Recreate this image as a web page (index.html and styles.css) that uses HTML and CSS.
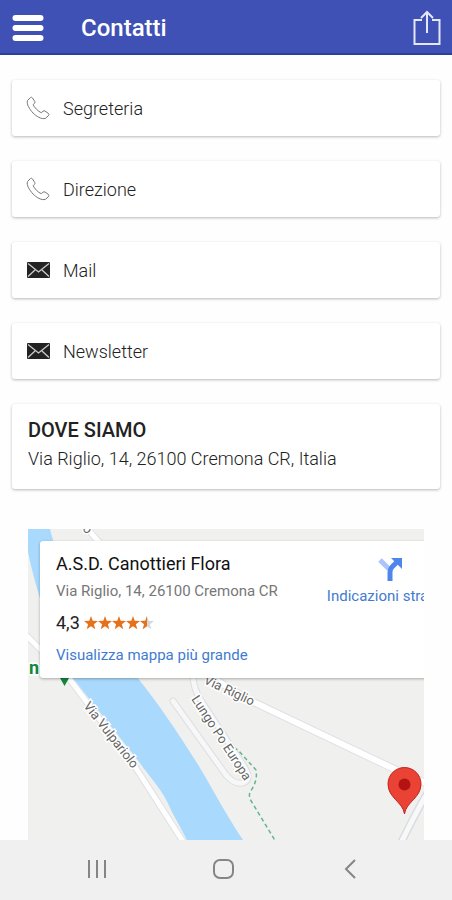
FILE: index.html
```
<!DOCTYPE html>
<html lang="it">
<head>
    <meta charset="UTF-8">
    <meta name="viewport" content="width=device-width, initial-scale=1.0">
    <title>Contatti</title>
    <link rel="stylesheet" href="styles.css">
</head>
<body>
    <header class="topbar">
        <button class="icon-button" type="button" aria-label="Menu">
            <svg width="32" height="28" viewBox="0 0 32 28">
                <path d="M3.500 4H28.500M3.500 14H28.500M3.500 24H28.500" stroke="#fff" stroke-width="6" stroke-linecap="round"/>
            </svg>
        </button>
        <h1 class="title">Contatti</h1>
        <button class="icon-button" type="button" aria-label="Condividi">
            <svg width="28" height="36" viewBox="0 0 28 36" fill="none" stroke="#e4e8fa" stroke-width="2">
                <path d="M9 10H1.500V34H26.500V10H19M14 23V2M8 8L14 2L20 8"/>
            </svg>
        </button>
    </header>

    <main class="content">
        <button class="card contact" type="button">
            <svg class="contact-icon" viewBox="0 0 24 24" fill="none" stroke="#777" stroke-width="1" stroke-linejoin="round">
                <path d="M1.500 4.500L4.500 1.500Q5.500 .7 6.500 2L8.800 5.500Q9.300 6.700 8.200 7.700L7.200 8.700C8 11 12 15.500 15.300 16.700L17 15.200Q18 14.500 19 15L22.300 17.300Q23.500 18.500 22.300 19.800L19.500 22.300C15.500 23.800 10 20 7 17C3.500 13 .2 8 1.500 4.500Z"/>
            </svg>
            <span>Segreteria</span>
        </button>
        <button class="card contact" type="button">
            <svg class="contact-icon" viewBox="0 0 24 24" fill="none" stroke="#777" stroke-width="1" stroke-linejoin="round">
                <path d="M1.500 4.500L4.500 1.500Q5.500 .7 6.500 2L8.800 5.500Q9.300 6.700 8.200 7.700L7.200 8.700C8 11 12 15.500 15.300 16.700L17 15.200Q18 14.500 19 15L22.300 17.300Q23.500 18.500 22.300 19.800L19.500 22.300C15.500 23.800 10 20 7 17C3.500 13 .2 8 1.500 4.500Z"/>
            </svg>
            <span>Direzione</span>
        </button>
        <button class="card contact" type="button">
            <svg class="contact-icon" viewBox="0 0 24 24" fill="none">
                <rect x="1" y="4" width="23" height="16" rx="1" fill="#222"/>
                <path d="M2 5.500L12.500 14L23 5.500M2 18.500L9 12M23 18.500L16 12" stroke="#ccc" stroke-width="1.300"/>
            </svg>
            <span>Mail</span>
        </button>
        <button class="card contact" type="button">
            <svg class="contact-icon" viewBox="0 0 24 24" fill="none">
                <rect x="1" y="4" width="23" height="16" rx="1" fill="#222"/>
                <path d="M2 5.500L12.500 14L23 5.500M2 18.500L9 12M23 18.500L16 12" stroke="#ccc" stroke-width="1.300"/>
            </svg>
            <span>Newsletter</span>
        </button>

        <section class="card address">
            <h2 class="address-title">DOVE SIAMO</h2>
            <p class="address-text">Via Riglio, 14, 26100 Cremona CR, Italia</p>
        </section>

        <section class="map">
            <svg class="map-canvas" viewBox="28 529 396 311" preserveAspectRatio="xMinYMin slice">
                <rect x="28" y="529" width="396" height="311" fill="#f0f0ef"/>
                <!-- fiume -->
                <path d="M28 529H50C56 555 75 600 137 677C158 703 178 733 195 760C207 778 220 805 243 840H187L171 810C162 788 150 778 140 763L72 677C55 645 38 600 28 552Z" fill="#a9d9fd"/>
                <!-- strade -->
                <g fill="none" stroke-linecap="round" stroke-linejoin="round">
                    <path d="M80 520L110 555M20 629L68 677L134 765L184 843" stroke="#dfe1e4" stroke-width="7"/>
                    <path d="M80 520L110 555M20 629L68 677L134 765L184 843" stroke="#fff" stroke-width="5"/>
                    <path d="M200 670L245 698L392 768L430 785" stroke="#dfe1e4" stroke-width="8"/>
                    <path d="M200 670L245 698L392 768L430 785" stroke="#fff" stroke-width="6"/>
                    <path d="M193 670Q192 688 202 702L245 768Q252 780 243 783Q235 785 226 775L173 701" stroke="#dcdee3" stroke-width="7"/>
                    <path d="M193 670Q192 688 202 702L245 768Q252 780 243 783Q235 785 226 775L173 701" stroke="#f7f7f7" stroke-width="5"/>
                    <path d="M428 792Q417 810 400 845" stroke="#d9dde3" stroke-width="8"/>
                    <path d="M428 792Q417 810 400 845" stroke="#f8f8f8" stroke-width="5"/>
                    <path d="M228 744L238 750L256 770Q258 781 250 792Q248 797 253 804L276 842" stroke="#65b48d" stroke-width="1.500" stroke-dasharray="4 3" stroke-linecap="butt"/>
                </g>
                <g class="map-labels">
                    <text x="83" y="706" transform="rotate(52 83 706)">Via Vulpariolo</text>
                    <text x="203" y="683" transform="rotate(25 203 683)">Via Riglio</text>
                    <text x="191" y="699" transform="rotate(57 191 699)">Lungo Po Europa</text>
                    <text x="82" y="529" transform="rotate(50 82 529)">o</text>
                    <text class="map-place" x="29" y="674">n</text>
                </g>
                <path d="M60 678H69L64.500 686Z" fill="#11873b"/>
                <path d="M404.500 814C403 802 388 798 388 784A16.500 16.500 0 0 1 421 784C421 798 406 802 404.500 814Z" fill="#ea4335" stroke="#c5221f" stroke-width="1"/>
                <circle cx="404.500" cy="784.500" r="6" fill="#b31412"/>
            </svg>

            <div class="place">
                <div class="place-info">
                    <h3 class="place-name">A.S.D. Canottieri Flora</h3>
                    <p class="place-address">Via Riglio, 14, 26100 Cremona CR</p>
                    <div class="rating">
                        <span>4,3</span>
                        <svg width="70" height="14" viewBox="0 0 70 14" aria-label="4,3 su 5">
                            <defs>
                                <path id="star" d="M7 0L8.700 4.800L14 5L9.900 8.200L11.300 13.200L7 10.300L2.700 13.200L4.100 8.200L0 5L5.300 4.800Z"/>
                                <clipPath id="half"><rect width="7" height="14"/></clipPath>
                            </defs>
                            <g fill="#e7711b">
                                <use href="#star"/>
                                <use href="#star" x="14"/>
                                <use href="#star" x="28"/>
                                <use href="#star" x="42"/>
                                <use href="#star" x="56" fill="#d5d8da"/>
                                <g transform="translate(56 0)"><use href="#star" clip-path="url(#half)"/></g>
                            </g>
                        </svg>
                    </div>
                    <a class="place-link" href="#">Visualizza mappa più grande</a>
                </div>
                <a class="directions" href="#">
                    <svg width="24" height="24" viewBox="0 0 24 24" fill="none">
                        <path d="M2 3L11 12" stroke="#a9c5fb" stroke-width="5"/>
                        <path d="M12 24V15Q12 12 14 10L19 5" stroke="#4e86ee" stroke-width="5"/>
                        <path d="M13 1H24V12Z" fill="#4e86ee"/>
                    </svg>
                    <span>Indicazioni stradali</span>
                </a>
            </div>
        </section>
    </main>

    <nav class="navbar">
        <button class="nav-button" type="button" aria-label="Recenti">
            <svg width="24" height="24" viewBox="0 0 24 24" fill="none" stroke="#858585" stroke-width="2">
                <path d="M4 2V20M12 2V20M20 2V20"/>
            </svg>
        </button>
        <button class="nav-button" type="button" aria-label="Home">
            <svg width="24" height="24" viewBox="0 0 24 24" fill="none" stroke="#858585" stroke-width="2">
                <rect x="2" y="2" width="19" height="18" rx="6"/>
            </svg>
        </button>
        <button class="nav-button" type="button" aria-label="Indietro">
            <svg width="24" height="24" viewBox="0 0 24 24" fill="none" stroke="#858585" stroke-width="2">
                <path d="M16 2L7 11L16 20"/>
            </svg>
        </button>
    </nav>
</body>
</html>
```
FILE: styles.css
```
* {
    box-sizing: border-box;
}
body {
    margin: 0;
    display: flex;
    flex-direction: column;
    min-height: 100vh;
    background: #fefefe;
    font-family: Roboto, Arial, sans-serif;
    color: #222;
}
button {
    border: none;
    padding: 0;
    background: none;
    font-family: inherit;
    color: inherit;
    cursor: pointer;
}
h1, h2, h3, p {
    margin: 0;
}
a {
    color: #3f7bd0;
    text-decoration: none;
}
svg {
    display: block;
}
.topbar {
    display: flex;
    align-items: center;
    height: 55px;
    padding: 0 11px 0 12px;
    background: #3f51b5;
    box-shadow: inset 0 -2px #2440a0;
    color: white;
}
.title {
    flex: 1;
    margin-left: 37px;
    font-size: 24px;
    font-weight: 500;
}
.content {
    flex: 1;
    display: flex;
    flex-direction: column;
    gap: 25px;
    padding: 25px 12px 0;
}
.card {
    background: white;
    border-radius: 3px;
    box-shadow: 0 1px 3px rgba(0, 0, 0, 0.28);
}
.contact {
    display: flex;
    align-items: center;
    gap: 13px;
    height: 56px;
    padding: 0 14px;
    font-size: 18px;
    font-weight: 300;
}
.contact-icon {
    width: 24px;
    height: 24px;
}
.address {
    padding: 12px 16px 15px;
}
.address-title {
    font-size: 20px;
    font-weight: 500;
    line-height: 28px;
}
.address-text {
    font-size: 18px;
    font-weight: 300;
    line-height: 30px;
}
.map {
    position: relative;
    flex: 1;
    margin: 15px 16px 0;
    overflow: hidden;
    background: #f0f0ef;
}
.map-canvas {
    width: 100%;
    height: 311px;
}
.map-labels {
    font-size: 13px;
    fill: #666;
    stroke: white;
    stroke-width: 3px;
    paint-order: stroke;
}
.map-place {
    font-size: 18px;
    font-weight: 700;
    fill: #11873b;
}
/* scheda sopra la mappa, tagliata dal bordo destro */
.place {
    position: absolute;
    top: 12px;
    left: 12px;
    display: flex;
    justify-content: space-between;
    width: 100%;
    height: 137px;
    padding: 11px 0 0 16px;
    background: white;
    border-radius: 3px;
    box-shadow: 0 1px 3px rgba(0, 0, 0, 0.3);
    white-space: nowrap;
}
.place-name {
    font-size: 18px;
    font-weight: 400;
    line-height: 24px;
    color: #111;
}
.place-address {
    font-size: 15px;
    line-height: 30px;
    color: #777;
}
.rating {
    display: flex;
    align-items: center;
    gap: 4px;
    font-size: 18px;
    line-height: 34px;
}
.place-link {
    font-size: 15px;
    line-height: 30px;
}
.directions {
    display: flex;
    flex-direction: column;
    align-items: center;
    gap: 3px;
    width: 125px;
    padding-top: 5px;
    margin-right: -16px;
    font-size: 15px;
    line-height: 24px;
}
.navbar {
    display: flex;
    justify-content: space-around;
    align-items: center;
    height: 60px;
    padding: 0 38px 0 34px;
    background: #f0f0f0;
}
.nav-button {
    width: 24px;
    height: 24px;
}
```
